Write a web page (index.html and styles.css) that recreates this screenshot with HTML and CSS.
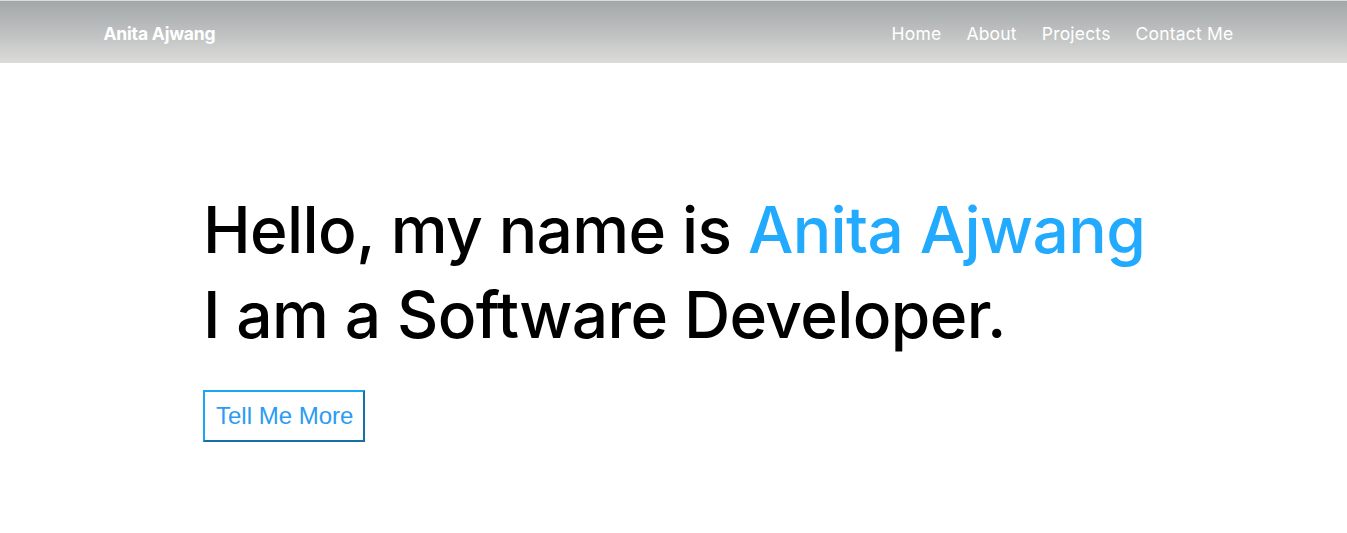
FILE: index.html
```html
<!DOCTYPE html>
<html lang="en">
<head>
<meta charset="utf-8">
<title>Anita Ajwang</title>
<link rel="stylesheet" href="styles.css">
</head>
<body>
<header class="navbar">
  <div class="nav-container">
    <a class="brand" href="#">Anita Ajwang</a>
    <nav class="nav-links">
      <a href="#">Home</a>
      <a href="#">About</a>
      <a href="#">Projects</a>
      <a href="#">Contact Me</a>
    </nav>
  </div>
</header>
<main class="hero">
  <div class="hero-inner">
    <h1 class="headline">Hello, my name is <span class="accent">Anita Ajwang</span><br>I am a Software Developer.</h1>
    <button class="more-btn" type="button">Tell Me More</button>
  </div>
</main>
</body>
</html>
```

FILE: styles.css
```css
* { box-sizing: border-box; }
html, body { margin: 0; padding: 0; background: #fff; }
body { font-family: "Inter", "DejaVu Sans", sans-serif; }

.navbar {
  height: 63px;
  border-top: 1px solid #dadcdc;
  background: linear-gradient(to bottom, #a3a7a8 0%, #c3c5c5 60%, #dcdcda 100%);
}
.nav-container {
  width: 1140px;
  margin: 0 auto;
  height: 100%;
  display: flex;
  align-items: center;
  justify-content: space-between;
  padding-top: 2px;
}
.brand {
  color: #fff;
  text-decoration: none;
  font-weight: 700;
  font-size: 17.5px;
  letter-spacing: -0.2px;
}
.nav-links { display: flex; gap: 25px; padding-right: 10px; }
.nav-links a {
  color: #fff;
  text-decoration: none;
  font-size: 17.5px;
  font-weight: 400;
  letter-spacing: 0.2px;
}

.hero { padding-top: 124px; }
.hero-inner { width: 941px; margin: 0 auto; }
.headline {
  margin: 0;
  font-weight: 500;
  font-size: 64px;
  line-height: 85px;
  color: #000;
  letter-spacing: -0.6px;
  white-space: nowrap;
}
.accent { color: #22aaff; }
.more-btn {
  margin-top: 33px;
  background: #fff;
  font-family: "Liberation Sans", Arial, sans-serif;
  font-size: 24px;
  color: #2b9cf2;
  padding: 10px 10px 10px 11px;
  border: 2px solid;
  border-color: #1ba6f4 #1670a6 #1670a6 #1ba6f4;
  line-height: 28px;
  cursor: pointer;
}
```
